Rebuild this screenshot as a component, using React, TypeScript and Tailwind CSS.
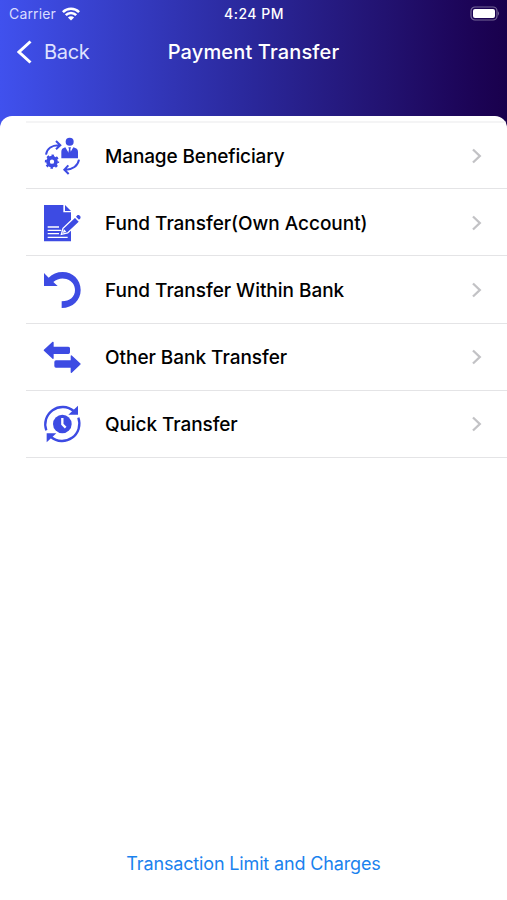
import React from 'react';

const ManageIcon = () => (
  <svg viewBox="0 0 120 120" className="h-10 w-10 text-[#3d4be3]" fill="currentColor">
    <circle cx="83" cy="17" r="12" />
    <path d="M58 67V47c0-7 4-11 12-13l12 20 12-20c9 2 14 6 14 13v20z" />
    <path d="M79 34h8l-2 6 3 14-5 9-5-9 3-14z" />
    <circle cx="30" cy="77" r="12" fill="none" stroke="currentColor" strokeWidth="11" />
    <circle cx="30" cy="77" r="18.5" fill="none" stroke="currentColor" strokeWidth="6" strokeDasharray="7.3 7.23" strokeDashoffset="3.6" />
    <path d="M12 56C15 38 30 27 52 28M42 15l13 13-13 12M111 71c-3 18-19 31-42 30M79 88L67 101l13 13" fill="none" stroke="currentColor" strokeWidth="6" />
  </svg>
);

const DocumentIcon = () => (
  <svg viewBox="0 0 120 120" className="h-10 w-10 text-[#3d4be3]" fill="currentColor">
    <path d="M6 6h58v22h23v87H6z" />
    <path d="M69 6l18 18H69z" />
    <path d="M17 72h34M17 82h41M17 92h34M17 103h60" stroke="white" strokeWidth="4" />
    <path d="M58 94l5-18 36-34 14 14-36 34z" stroke="white" strokeWidth="4" />
    <path d="M66 79l-4 11 11-4" fill="white" />
    <path d="M102 41l4-4c5-3 12 4 9 9l-4 4z" />
  </svg>
);

const UndoIcon = () => (
  <svg viewBox="0 0 120 120" className="h-10 w-10 text-[#3d4be3]" fill="currentColor">
    <path d="M6 9v39h41L34 36C45 26 60 23 73 27c17 5 26 18 26 33 0 20-15 34-40 34v20c34 0 57-24 57-54 0-31-24-54-54-54-17 0-31 6-42 17z" />
  </svg>
);

const ArrowsIcon = () => (
  <svg viewBox="0 0 120 120" className="h-10 w-10 text-[#3d4be3]" fill="currentColor" stroke="currentColor" strokeWidth="4" strokeLinejoin="round">
    <path d="M7 40l26-24v15h46q3 0 3 3v12q0 3-3 3H33v15z" />
    <path d="M114 81L88 57v15H42q-3 0-3 3v12q0 3 3 3h46v16z" />
  </svg>
);

const QuickIcon = () => (
  <svg viewBox="0 0 120 120" className="h-10 w-10 text-[#3d4be3]" fill="currentColor">
    <circle cx="61" cy="60" r="28" />
    <path d="M61 42v19l10 10" fill="none" stroke="white" strokeWidth="7" />
    <path d="M13 79A52 52 0 0 1 95 21M109 41A52 52 0 0 1 27 99" fill="none" stroke="currentColor" strokeWidth="7" />
    <path d="M108 5v27H79zM14 88h29l-29 27z" />
  </svg>
);

const items = [
  { label: 'Manage Beneficiary', icon: ManageIcon, spacing: 'tracking-[-0.12px]' },
  { label: 'Fund Transfer(Own Account)', icon: DocumentIcon, spacing: 'tracking-[-0.03px]' },
  { label: 'Fund Transfer Within Bank', icon: UndoIcon, spacing: 'tracking-[-0.03px]' },
  { label: 'Other Bank Transfer', icon: ArrowsIcon, spacing: 'tracking-[-0.03px]' },
  { label: 'Quick Transfer', icon: QuickIcon, spacing: 'tracking-[-0.08px]' },
];

const StatusBar = () => (
  <div className="grid h-[27px] grid-cols-[1fr_auto_1fr] items-center pl-[9px] pr-[8px] text-[14px] leading-none">
    <div className="flex items-center gap-[6px]">
      <span className="tracking-[0.15px] text-[#d9dcff]">Carrier</span>
      <svg viewBox="0 0 18 14" className="h-[14px] w-[18px]" fill="none" stroke="white" strokeWidth="2.6">
        <path d="M.9 5.1a11.5 11.5 0 0 1 16.2 0M3.8 8.2a7.3 7.3 0 0 1 10.4 0" />
        <path d="M9 13.6L5.9 10.5a4.4 4.4 0 0 1 6.2 0z" fill="white" stroke="none" />
      </svg>
    </div>
    <span className="font-medium tracking-[0.5px]">4:24 PM</span>
    <svg viewBox="0 0 31 15" className="h-[15px] w-[31px] justify-self-end">
      <rect x="3" y="1" width="26" height="13" rx="4" fill="none" stroke="white" strokeOpacity=".4" strokeWidth="1.2" />
      <rect x="5" y="3" width="22" height="9" rx="2" fill="white" />
      <path d="M30 5.3q2 2.2 0 4.4z" fill="white" fillOpacity=".4" />
    </svg>
  </div>
);

export default function App() {
  return (
    <div className="flex h-[900px] w-[507px] flex-col overflow-hidden bg-gradient-to-r from-[#4051ee] via-[#2a279a] to-[#19004c] font-['Inter',sans-serif] text-white">
      <StatusBar />
      <header className="grid h-[50px] grid-cols-[1fr_auto_1fr] items-center">
        <button className="flex items-center gap-[12px] pl-[17px] text-left text-[20px] tracking-[-0.3px] text-[#dfe2ff]">
          <svg viewBox="0 0 15 24" className="h-6 w-[15px]" fill="none" stroke="white" strokeWidth="3">
            <path d="M13.5 1.5L2 12l11.5 10.5" />
          </svg>
          Back
        </button>
        <h1 className="text-[20px] font-medium tracking-[0.15px]">Payment Transfer</h1>
      </header>

      <main className="mt-[39px] flex flex-1 flex-col overflow-hidden rounded-t-[12px] bg-white pt-[5px]">
        <ul className="ml-[26px] border-t-2 border-[#f4f4f5] text-black">
          {items.map(({ label, icon: Icon, spacing }) => (
            <li key={label} className="flex h-[67.2px] items-center border-b border-[#e4e4e6] pl-[15.5px] pr-[25px] pt-[1.2px] first:h-[66.2px]">
              <Icon />
              <span className={`ml-[23.5px] flex-1 whitespace-nowrap pt-0.5 text-[19px] font-medium ${spacing}`}>{label}</span>
              <svg viewBox="0 0 11 16" className="h-4 w-[11px]" fill="none" stroke="#c2c2c5" strokeWidth="2.3">
                <path d="M2 1.5L8.8 8 2 14.5" />
              </svg>
            </li>
          ))}
        </ul>
        <button className="mx-auto mt-auto mb-[23px] text-[18px] leading-[26px] tracking-[-0.15px] text-[#1a82ee]">Transaction Limit and Charges</button>
      </main>
    </div>
  );
}
